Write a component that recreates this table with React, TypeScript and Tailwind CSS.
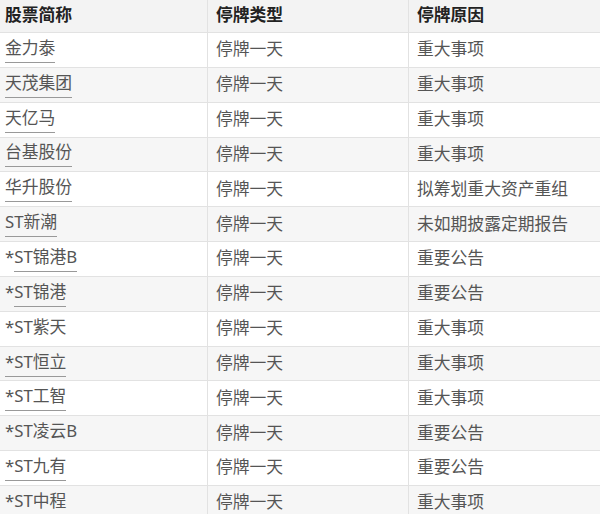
// Suspended stocks table
interface Row {
  prefix?: string;
  name: string;
  link: boolean;
  reason: string;
}

const rows: Row[] = [
  { name: "金力泰", link: true, reason: "重大事项" },
  { name: "天茂集团", link: true, reason: "重大事项" },
  { name: "天亿马", link: true, reason: "重大事项" },
  { name: "台基股份", link: true, reason: "重大事项" },
  { name: "华升股份", link: true, reason: "拟筹划重大资产重组" },
  { name: "ST新潮", link: true, reason: "未如期披露定期报告" },
  { prefix: "*", name: "ST锦港B", link: true, reason: "重要公告" },
  { prefix: "*", name: "ST锦港", link: true, reason: "重要公告" },
  { name: "*ST紫天", link: false, reason: "重大事项" },
  { name: "*ST恒立", link: true, reason: "重大事项" },
  { name: "*ST工智", link: true, reason: "重大事项" },
  { name: "*ST凌云B", link: false, reason: "重要公告" },
  { name: "*ST九有", link: true, reason: "重要公告" },
  { name: "*ST中程", link: true, reason: "重大事项" },
];

const font = { fontFamily: '"Noto Sans", "Noto Sans CJK SC", sans-serif' };

export default function App() {
  return (
    <div className="w-[600px] h-[514px] overflow-hidden bg-white text-[16.8px]" style={font}>
      {/* header */}
      <div className="grid grid-cols-[207px_201px_1fr] h-[33px] bg-[#f3f3f3] border-b border-[#e2e2e2] font-bold text-[#222]">
        <div className="flex items-center pl-[5px] pb-[2px]">股票简称</div>
        <div className="flex items-center pl-[8px] pb-[2px] border-l border-[#e2e2e2]">停牌类型</div>
        <div className="flex items-center pl-[8px] pb-[2px] border-l border-[#e2e2e2]">停牌原因</div>
      </div>

      {rows.map((row, i) => (
        <div
          key={row.name}
          className={`grid grid-cols-[207px_201px_1fr] h-[34.85px] border-b border-[#e2e2e2] text-[#555] ${
            i % 2 === 1 ? "bg-[#f6f6f6]" : "bg-white"
          }`}
        >
          <div className="flex items-center pl-[5px]">
            {row.prefix && <span className="leading-[22px] pb-[3px]">{row.prefix}</span>}
            <span
              className={`inline-block leading-[22px] pb-[3px] ${
                row.link ? "border-b border-[#999]" : "border-b border-transparent"
              }`}
            >
              {row.name}
            </span>
          </div>
          <div className="flex items-center pl-[8px] pb-[2px] border-l border-[#e2e2e2]">停牌一天</div>
          <div className="flex items-center pl-[8px] pb-[2px] border-l border-[#e2e2e2]">{row.reason}</div>
        </div>
      ))}
    </div>
  );
}
